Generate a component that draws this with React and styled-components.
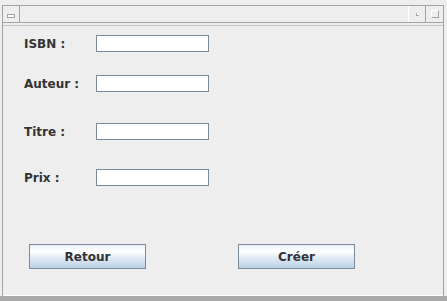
import React from 'react';
import styled, {createGlobalStyle} from 'styled-components';

const Global = createGlobalStyle`
    html, body {
        margin: 0;
        padding: 0;
        background: #eeeeee;
    }
`;

const Screen = styled.div`
    width: 447px;
    height: 301px;
    box-sizing: border-box;
    padding-top: 5px;
    display: flex;
    flex-direction: column;
    background: #eeeeee;
    font-family: "DejaVu Sans", sans-serif;
    overflow: hidden;
`;

const Window = styled.div`
    flex: 1;
    margin: 0 3px 0 2px;
    border: 1px solid #a3a3a3;
    border-bottom: none;
    display: flex;
    flex-direction: column;
`;

const TitleBar = styled.div`
    height: 16px;
    display: flex;
    border-bottom: 1px solid #a3a3a3;
`;

const TitleCell = styled.div`
    width: ${props => props.w || 16}px;
    flex: ${props => props.grow ? 1 : 'none'};
    border-right: ${props => props.line ? '1px solid #a3a3a3' : 'none'};
    border-left: ${props => props.light ? '1px solid #ffffff' : 'none'};
    display: flex;
    align-items: center;
    justify-content: center;
`;

const MinGlyph = styled.div`
    width: 6px;
    height: 2px;
    margin-top: 3px;
    background: #fff;
    border: 1px solid #a3a3a3;
`;

const DotGlyph = styled.div`
    width: 2px;
    height: 2px;
    border-left: 1px solid #a3a3a3;
    border-bottom: 1px solid #a3a3a3;
    background: #fff;
`;

const BoxGlyph = styled.div`
    width: 6px;
    height: 6px;
    border: 1px solid #fff;
    border-right-color: #a3a3a3;
    border-bottom-color: #a3a3a3;
`;

const Panel = styled.div`
    flex: 1;
    margin-top: 2px;
    border-top: 1px solid #c4c4c4;
    border-bottom: 1px solid #ffffff;
    padding: 9px 0 0 21px;
    display: flex;
    flex-direction: column;
`;

const Row = styled.div`
    display: flex;
    align-items: center;
    margin-top: ${props => props.gap}px;
`;

const Label = styled.div`
    width: 72px;
    font-size: 12px;
    font-weight: bold;
    color: #333333;
`;

const Field = styled.div`
    width: 111px;
    height: 15px;
    background: #ffffff;
    border: 1px solid #7a8a99;
`;

const Buttons = styled.div`
    display: flex;
    gap: 92px;
    margin-top: 58px;
    padding-left: 5px;
`;

const Button = styled.button`
    width: 117px;
    height: 25px;
    border: 1px solid #7a8a99;
    border-radius: 0;
    background: linear-gradient(to bottom, #e8f0f8 0%, #ffffff 28%, #dde8f3 60%, #bcd1e6 100%);
    font-family: "DejaVu Sans", sans-serif;
    font-size: 12px;
    font-weight: bold;
    color: #333333;
    padding: 0;
`;

const Bottom = styled.div`
    height: 5px;
    background: #a8a8a8;
`;

const rows = [
    {label: 'ISBN :', gap: 0},
    {label: 'Auteur :', gap: 23},
    {label: 'Titre :', gap: 31},
    {label: 'Prix :', gap: 29},
];

export default () => {
    return (
        <Screen>
            <Global/>
            <Window>
                <TitleBar>
                    <TitleCell w={16} line><MinGlyph/></TitleCell>
                    <TitleCell grow/>
                    <TitleCell w={16} light line><DotGlyph/></TitleCell>
                    <TitleCell w={17}><BoxGlyph/></TitleCell>
                </TitleBar>
                <Panel>
                    {rows.map(r => (
                        <Row key={r.label} gap={r.gap}>
                            <Label>{r.label}</Label>
                            <Field/>
                        </Row>
                    ))}
                    <Buttons>
                        <Button>Retour</Button>
                        <Button>Créer</Button>
                    </Buttons>
                </Panel>
            </Window>
            <Bottom/>
        </Screen>
    )
}
